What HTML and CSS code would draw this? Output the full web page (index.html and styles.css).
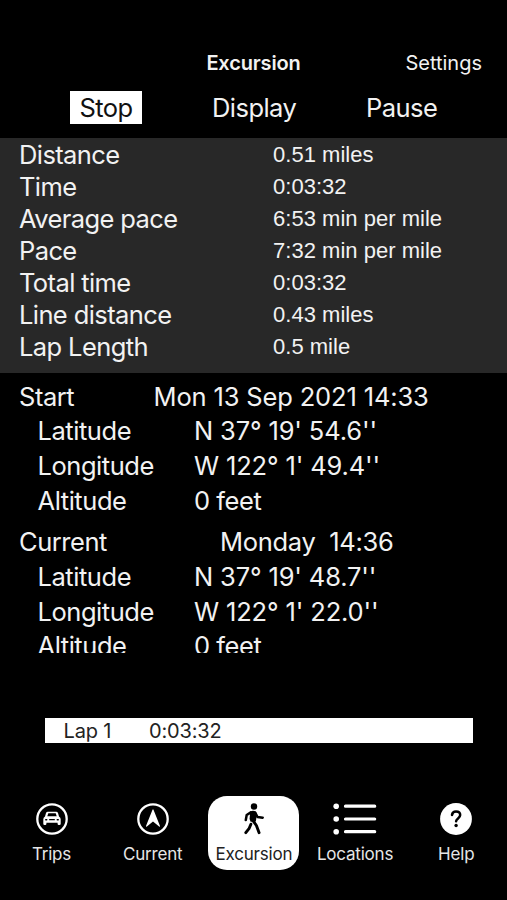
FILE: index.html
```html
<!DOCTYPE html>
<html lang="en">
<head>
<meta charset="utf-8">
<title>Excursion</title>
<link rel="stylesheet" href="styles.css">
</head>
<body>
<div class="screen">
  <header class="navbar">
    <h1 class="title">Excursion</h1>
    <a class="settings">Settings</a>
  </header>
  <div class="actions">
    <button class="action active">Stop</button>
    <button class="action display">Display</button>
    <button class="action pause">Pause</button>
  </div>
  <section class="stats">
    <div class="stat"><span>Distance</span><span class="value">0.51 miles</span></div>
    <div class="stat"><span>Time</span><span class="value">0:03:32</span></div>
    <div class="stat"><span>Average pace</span><span class="value">6:53 min per mile</span></div>
    <div class="stat"><span>Pace</span><span class="value">7:32 min per mile</span></div>
    <div class="stat"><span>Total time</span><span class="value">0:03:32</span></div>
    <div class="stat"><span>Line distance</span><span class="value">0.43 miles</span></div>
    <div class="stat"><span>Lap Length</span><span class="value">0.5 mile</span></div>
  </section>
  <main class="places">
    <section class="place">
      <div class="place-head"><span>Start</span><span class="date">Mon 13 Sep 2021 14:33</span></div>
      <div class="coord"><span>Latitude</span><span class="reading">N 37° 19' 54.6''</span></div>
      <div class="coord"><span>Longitude</span><span class="reading">W 122° 1' 49.4''</span></div>
      <div class="coord"><span>Altitude</span><span>0 feet</span></div>
    </section>
    <section class="place">
      <div class="place-head now"><span>Current</span><span class="date">Monday&nbsp; 14:36</span></div>
      <div class="coord"><span>Latitude</span><span class="reading">N 37° 19' 48.7''</span></div>
      <div class="coord"><span>Longitude</span><span class="reading">W 122° 1' 22.0''</span></div>
      <div class="coord"><span>Altitude</span><span>0 feet</span></div>
    </section>
  </main>
  <div class="lap"><span>Lap 1</span><span class="lap-time">0:03:32</span></div>
  <nav class="tabs">
    <a class="tab">
      <svg class="icon" viewBox="0 0 32 32" width="32" height="32">
        <circle cx="16" cy="16" r="14.7" fill="none" stroke="currentColor" stroke-width="2.3"/>
        <path fill="currentColor" fill-rule="evenodd" d="M11.8 8.800h8.400q1.300 0 1.800 1.300l1 3.300q1.700 1.100 1.700 2.900v4.500q0 1.200-1.200 1.200h-.7q-1.200 0-1.200-1.200v-1H10.400v1q0 1.200-1.200 1.200h-.7q-1.200 0-1.200-1.200v-4.500q0-1.800 1.700-2.900l1-3.300q.5-1.300 1.800-1.300zM12.300 10.200l-1 3h9.400l-1-3zM9.200 15.900v1.300q1 .5 2.100 0v-1.300zM13.200 15.900v1.400h5.600v-1.400zM20.700 15.900v1.300q1.100.5 2.100 0v-1.300z"/>
      </svg>
      <span>Trips</span>
    </a>
    <a class="tab">
      <svg class="icon" viewBox="0 0 32 32" width="32" height="32">
        <circle cx="16" cy="16" r="14.7" fill="none" stroke="currentColor" stroke-width="2.3"/>
        <path fill="currentColor" d="M15.500 6.800q.5-.9 1 0l6.400 16q.4 1.400-.8.800L16 18.400l-6.100 5.200q-1.200.6-.8-.8z"/>
      </svg>
      <span>Current</span>
    </a>
    <a class="tab selected">
      <svg class="icon" viewBox="0 0 32 32" width="32" height="32">
        <circle cx="16" cy="3.500" r="3.200" fill="currentColor"/>
        <path fill="currentColor" d="M12.200 8.700q3.200-1.800 5.800.3l.8 3.200-1 6.300-5.200.2-1-2.600z"/>
        <g fill="none" stroke="currentColor" stroke-linecap="round" stroke-linejoin="round">
          <path stroke-width="2.500" d="M12.800 9.400 8.700 12l-.9 5M17.200 9.500l2.300 4.500 5.200.7"/>
          <path stroke-width="2.900" d="M14.800 17.300l3.600 5.200 2.700 7.200M12.900 21.200l-1.700 4.100-3.400 4.400"/>
        </g>
      </svg>
      <span>Excursion</span>
    </a>
    <a class="tab">
      <svg class="icon" viewBox="0 0 44 32" width="44" height="32">
        <g fill="currentColor"><circle cx="3.200" cy="3.200" r="2.800"/><circle cx="3.200" cy="16" r="2.800"/><circle cx="3.200" cy="28.700" r="2.800"/></g>
        <path stroke="currentColor" stroke-width="3.200" stroke-linecap="round" d="M12.500 3.200h29.200M12.500 16h29.200M12.500 28.700h29.200"/>
      </svg>
      <span>Locations</span>
    </a>
    <a class="tab">
      <svg class="icon" viewBox="0 0 32 32" width="32" height="32">
        <circle cx="16" cy="16" r="15.900" fill="currentColor"/>
        <path fill="none" stroke="#000" stroke-width="2.500" stroke-linecap="round" stroke-linejoin="round" d="M12 12c.3-2.400 1.900-3.500 4-3.500 2.500 0 4.200 1.400 4.200 3.600 0 3.300-4.100 3.300-4.100 6.200"/>
        <circle cx="16.100" cy="22.500" r="1.700" fill="#000"/>
      </svg>
      <span>Help</span>
    </a>
  </nav>
</div>
</body>
</html>
```

FILE: styles.css
```css
* { box-sizing: border-box; }

body {
  margin: 0;
  background: #000;
  color: #f2f2f2;
  font-family: Inter, "Liberation Sans", sans-serif;
}

.screen {
  display: flex;
  flex-direction: column;
  width: 507px;
  height: 900px;
  overflow: hidden;
}

.navbar {
  display: grid;
  grid-template-columns: 1fr auto 1fr;
  align-items: center;
  height: 44px;
  margin-top: 40px;
  padding: 1px 25px 0;
}

.title {
  grid-column: 2;
  margin: 0;
  font-size: 20px;
  font-weight: 600;
  letter-spacing: -0.15px;
}

.settings {
  justify-self: end;
  font-size: 20px;
}

.actions {
  display: grid;
  grid-template-columns: 72px 84px 70px;
  column-gap: 70px;
  align-items: center;
  height: 53.500px;
  padding: 0 0 6px 70px;
}

.action {
  height: 33px;
  padding: 0;
  border: 0;
  background: none;
  color: inherit;
  font: 25.500px/33px Inter, sans-serif;
  letter-spacing: -0.550px;
  white-space: nowrap;
}

.action.active {
  background: #fff;
  color: #111;
}

.stats {
  height: 235px;
  padding-top: 1px;
  background: #282828;
}

.stat {
  display: grid;
  grid-template-columns: 254px 1fr;
  height: 32.170px;
  padding-left: 19px;
  font-size: 25.500px;
  line-height: 32.170px;
  letter-spacing: -0.6px;
}

.value {
  font-family: "Liberation Sans", sans-serif;
  font-size: 22px;
  letter-spacing: 0.020px;
}

.places {
  display: flex;
  flex-direction: column;
  gap: 7px;
  height: 280.500px;
  padding-top: 7px;
  overflow: hidden;
  font-size: 25.500px;
  line-height: 34.700px;
  letter-spacing: -0.450px;
  white-space: nowrap;
}

.place-head {
  display: grid;
  grid-template-columns: 134.500px 1fr;
  padding-left: 19px;
}

.place-head.now { grid-template-columns: 201px 1fr; }

.date { letter-spacing: -0.150px; }

.place-head.now .date { letter-spacing: -0.3px; }

.coord {
  display: grid;
  grid-template-columns: 156.500px 1fr;
  padding-left: 37.500px;
}

.reading { letter-spacing: -0.150px; }

.lap {
  display: grid;
  grid-template-columns: 85.500px 1fr;
  width: 428px;
  height: 25px;
  margin: 65px 0 0 45px;
  padding-left: 18.500px;
  background: #fff;
  color: #222;
  font-size: 20px;
  line-height: 26px;
  letter-spacing: -0.150px;
}

.tabs {
  display: grid;
  grid-template-columns: repeat(5, 91px);
  column-gap: 10.200px;
  margin: 53px 0 0 6px;
}

.tab {
  display: flex;
  flex-direction: column;
  align-items: center;
  height: 74px;
  padding-top: 7px;
  color: #fff;
  font-size: 17px;
  line-height: 22px;
  letter-spacing: -0.2px;
}

.icon { flex: none; }

.tab span {
  margin-top: 8px;
  color: #e6e6e6;
}

.tab.selected {
  border-radius: 19px;
  background: #fff;
  color: #000;
}

.tab.selected span { color: #222; }
```
